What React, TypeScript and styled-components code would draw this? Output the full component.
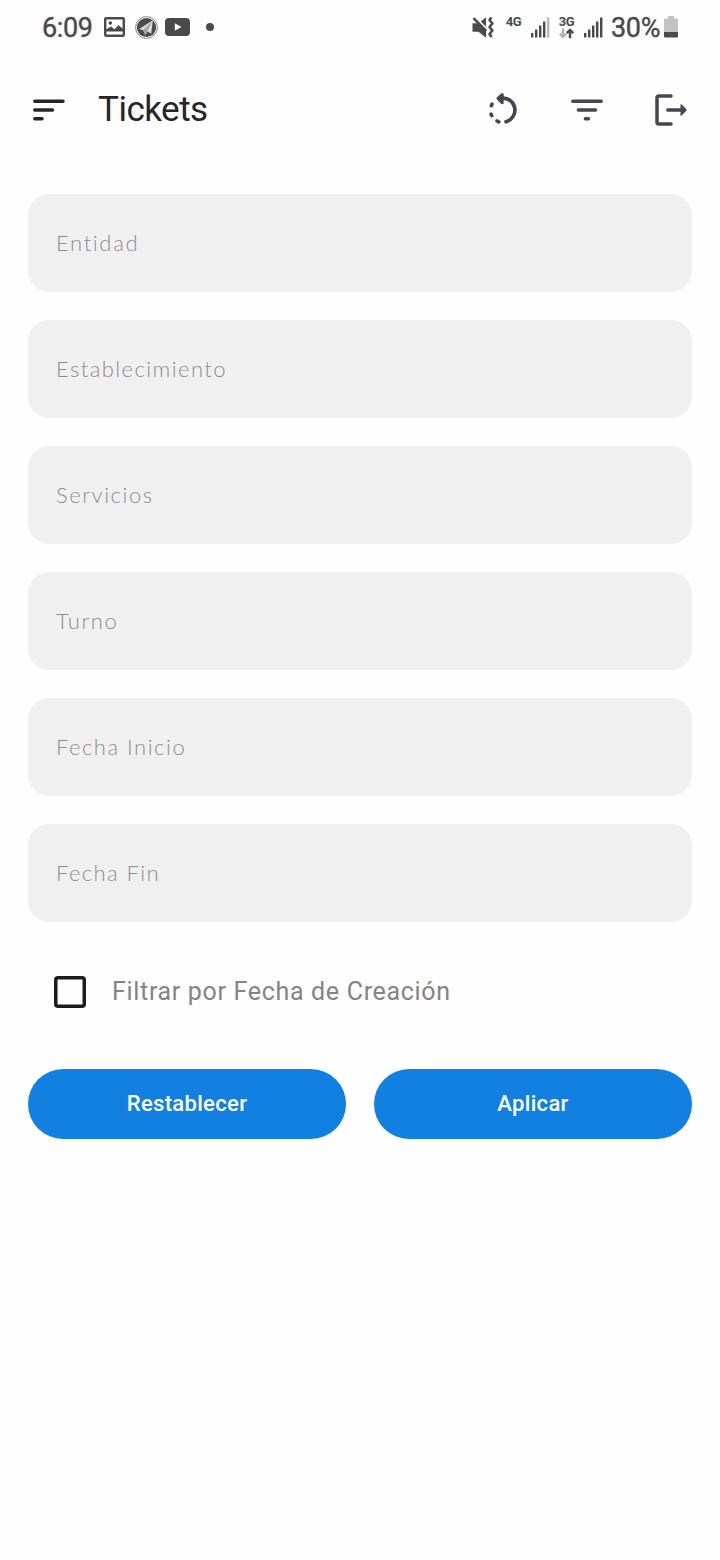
import React from "react";
import styled, { createGlobalStyle } from "styled-components";

const GlobalStyle = createGlobalStyle`
  * { box-sizing: border-box; }
  body { margin: 0; background: #fefefe; font-family: Roboto, "Liberation Sans", sans-serif; }
`;

const Screen = styled.div`
  width: 720px;
  min-height: 1560px;
  background: #fefefe;
`;

const StatusBar = styled.header`
  display: flex;
  justify-content: space-between;
  height: 54px;
  padding: 0 42px;
  color: #4a4a4a;
`;

const StatusGroup = styled.div`
  display: flex;
  align-items: center;
`;

const StatusText = styled.span<{ $width: number }>`
  width: ${(p) => p.$width}px;
  font-size: 27px;
  line-height: 32px;
  letter-spacing: -0.35px;
  padding-top: 2px;
  white-space: nowrap;
  -webkit-text-stroke: 0.4px currentColor;
`;

const Network = styled.div<{ $left: number }>`
  display: flex;
  flex-direction: column;
  align-items: center;
  width: 17px;
  height: 23px;
  margin-left: ${(p) => p.$left}px;
  font-size: 13px;
  font-weight: 700;
  line-height: 11px;
  letter-spacing: -0.3px;
`;

const Icon = styled.svg<{ $left?: number }>`
  display: block;
  flex: none;
  margin-left: ${(p) => p.$left ?? 0}px;
  overflow: visible;
`;

const AppBar = styled.nav`
  display: flex;
  align-items: center;
  height: 112px;
  padding: 0 32px;
  color: #46464f;
`;

const Title = styled.h1`
  flex: 1;
  margin: 0 0 0 32px;
  color: #252525;
  font-size: 35px;
  font-weight: 400;
  line-height: 42px;
  letter-spacing: -0.5px;
`;

const IconButton = styled.button<{ $tone?: string }>`
  display: flex;
  padding: 0;
  border: 0;
  background: none;
  color: ${(p) => p.$tone ?? "inherit"};
`;

const Actions = styled.div`
  display: flex;
  gap: 50px;
`;

const Form = styled.form`
  display: flex;
  flex-direction: column;
  gap: 28px;
  padding: 28px;
`;

const Field = styled.div`
  display: flex;
  align-items: center;
  height: 98px;
  padding: 0 28px;
  border-radius: 21px;
  background: #f0f0f0;
`;

const FieldLabel = styled.span<{ $spacing: number }>`
  color: #8e8e8e;
  font-family: Lato, "Open Sans", sans-serif;
  font-size: 22px;
  font-weight: 300;
  line-height: 28px;
  letter-spacing: ${(p) => p.$spacing}px;
`;

const CheckRow = styled.label`
  display: flex;
  align-items: center;
  gap: 26px;
  height: 84px;
  padding-left: 26px;
  color: #858383;
  font-size: 25px;
  letter-spacing: 0.68px;
`;

const CheckText = styled.span`
  padding-bottom: 2px;
`;

const CheckBox = styled.span`
  width: 32px;
  height: 32px;
  border-radius: 4px;
  box-shadow: inset 0 0 0 3.5px #1c1b20;
`;

const ButtonRow = styled.div`
  display: grid;
  grid-template-columns: 1fr 1fr;
  gap: 28px;
  margin-top: 7px;
`;

const PillButton = styled.button`
  height: 70px;
  padding: 0 0 2px;
  border: 0;
  border-radius: 35px;
  background: #1180e1;
  color: #fff;
  font-family: Roboto, sans-serif;
  font-size: 22px;
  font-weight: 500;
  letter-spacing: 0.32px;
`;

const Signal = ({ left, weak }: { left: number; weak?: boolean }) => (
  <Icon $left={left} width="18" height="21" viewBox="0 0 18 21" fill="currentColor">
    <rect x="0" y="16" width="2.4" height="4.5" />
    <rect x="4" y="12.5" width="2.4" height="8" />
    <rect x="8" y="8.5" width="2.4" height="12" />
    <rect x="12" y="4.5" width="2.4" height="16" />
    <rect x="16" y="0.5" width="2.4" height="20" fill={weak ? "#b8b8b8" : "currentColor"} />
  </Icon>
);

const fields = [
  { label: "Entidad", spacing: 1.65 },
  { label: "Establecimiento", spacing: 1.42 },
  { label: "Servicios", spacing: 1.55 },
  { label: "Turno", spacing: 1.6 },
  { label: "Fecha Inicio", spacing: 1.5 },
  { label: "Fecha Fin", spacing: 1.4 },
];

export default function App() {
  return (
    <Screen>
      <GlobalStyle />
      <StatusBar>
        <StatusGroup>
          <StatusText $width={51}>6:09</StatusText>
          <Icon $left={10.5} width="21" height="20" viewBox="0 0 21 20">
            <rect x="1.2" y="1.2" width="18.6" height="17.6" rx="1" fill="none" stroke="currentColor" strokeWidth="2.4" />
            <path d="M2 14.5V12.5L7 9.5L10.5 12.3L14.5 8L19 12V14.5Z" fill="currentColor" />
            <circle cx="6.3" cy="6" r="1.8" fill="currentColor" />
          </Icon>
          <Icon $left={10} width="23" height="23" viewBox="0 0 23 23">
            <circle cx="11.5" cy="11.5" r="10.9" fill="#fefefe" stroke="#808080" strokeWidth="1" />
            <circle cx="11.5" cy="11.5" r="9.6" fill="currentColor" />
            <path d="M4 13L17.8 4.3L16.3 17.5L12 15.5L10.5 19.5L8.2 14.3Z" fill="#d8d8d8" />
            <path d="M8.2 14.3L17 5.5L12 15.5L10.5 19.5Z" fill="#a2a2a2" />
          </Icon>
          <Icon $left={7} width="25" height="18" viewBox="0 0 25 18">
            <rect width="25" height="18" rx="4" fill="currentColor" />
            <path d="M9.8 5.2L16.6 9L9.8 12.8Z" fill="#fefefe" />
          </Icon>
          <Icon $left={16} width="8" height="8" viewBox="0 0 8 8">
            <circle cx="4" cy="4" r="4" fill="currentColor" />
          </Icon>
        </StatusGroup>
        <StatusGroup>
          <Icon width="22" height="23" viewBox="0 0 22 23">
            <path d="M0.5 7.2H5.5L14 15V21.7L6.5 15.8H0.5Z M8.8 5.5L14 1.2V10.8Z" fill="currentColor" />
            <path d="M1.5 2.2L14.2 14.9" stroke="currentColor" strokeWidth="2.6" />
            <path d="M19.4 1.5L17.5 4L20.4 7.5L17.5 11L20.4 14.5L17.5 18L19.6 21" fill="none" stroke="currentColor" strokeWidth="2.6" strokeLinejoin="round" />
          </Icon>
          <Network $left={11}>4G</Network>
          <Signal left={9} weak />
          <Network $left={9}>
            3G
            <Icon width="15" height="12" viewBox="0 0 15 12" fill="none" strokeWidth="2.2">
              <path d="M4 1.5V10M0.8 6.8L4 10L7.2 6.8" stroke="#b0b0b0" />
              <path d="M11 11.2V3M7.8 6.2L11 3L14.2 6.2" stroke="currentColor" strokeWidth="2.4" />
            </Icon>
          </Network>
          <Signal left={9} />
          <Icon $left={9} width="0" height="0" />
          <StatusText $width={53}>30%</StatusText>
          <Icon width="14" height="22" viewBox="0 0 14 22">
            <path d="M4 0H10V2.5H13Q14 2.5 14 3.5V16H0V3.5Q0 2.5 1 2.5H4Z" fill="#c2c2c2" />
            <path d="M0 16H14V20.5Q14 21.5 13 21.5H1Q0 21.5 0 20.5Z" fill="currentColor" />
          </Icon>
        </StatusGroup>
      </StatusBar>

      <AppBar>
        <IconButton type="button" aria-label="Menú" $tone="#252525">
          <Icon width="34" height="34" viewBox="0 0 34 34" fill="none" stroke="currentColor" strokeWidth="3.5" strokeLinecap="round">
            <path d="M2.8 8.2H31M2.8 17H20.5M2.8 25.7H10" />
          </Icon>
        </IconButton>
        <Title>Tickets</Title>
        <Actions>
          <IconButton type="button" aria-label="Recargar">
            <Icon width="34" height="34" viewBox="0 0 34 34" fill="none" stroke="currentColor" strokeWidth="3.6" strokeLinecap="round">
              <path d="M17 5.1A12 12 0 0 1 20 28.7" />
              <path d="M6.1 11.1L5.3 12.7M5 21.1L5.8 22.7M11 28L12.8 28.9" />
              <path d="M12 5.4L16.2 1.6V9.8Z" fill="currentColor" strokeWidth="3" strokeLinejoin="round" />
            </Icon>
          </IconButton>
          <IconButton type="button" aria-label="Filtrar">
            <Icon width="34" height="34" viewBox="0 0 34 34" fill="none" stroke="currentColor" strokeWidth="3.5" strokeLinecap="round">
              <path d="M2.8 8.2H31.2M8.4 17H25.5M15.4 25.7H18.5" />
            </Icon>
          </IconButton>
          <IconButton type="button" aria-label="Salir">
            <Icon width="34" height="34" viewBox="0 0 34 34" fill="none" stroke="currentColor" strokeWidth="3.5" strokeLinecap="round">
              <path d="M17 3H5Q3 3 3 5V29Q3 31 5 31H17M13.8 17H28" />
              <path d="M27.2 12L32 17L27.2 22Z" fill="currentColor" strokeWidth="1.5" strokeLinejoin="round" />
            </Icon>
          </IconButton>
        </Actions>
      </AppBar>

      <Form>
        {fields.map((f) => (
          <Field key={f.label}>
            <FieldLabel $spacing={f.spacing}>{f.label}</FieldLabel>
          </Field>
        ))}
        <CheckRow>
          <CheckBox />
          <CheckText>Filtrar por Fecha de Creación</CheckText>
        </CheckRow>
        <ButtonRow>
          <PillButton type="button">Restablecer</PillButton>
          <PillButton type="button">Aplicar</PillButton>
        </ButtonRow>
      </Form>
    </Screen>
  );
}
